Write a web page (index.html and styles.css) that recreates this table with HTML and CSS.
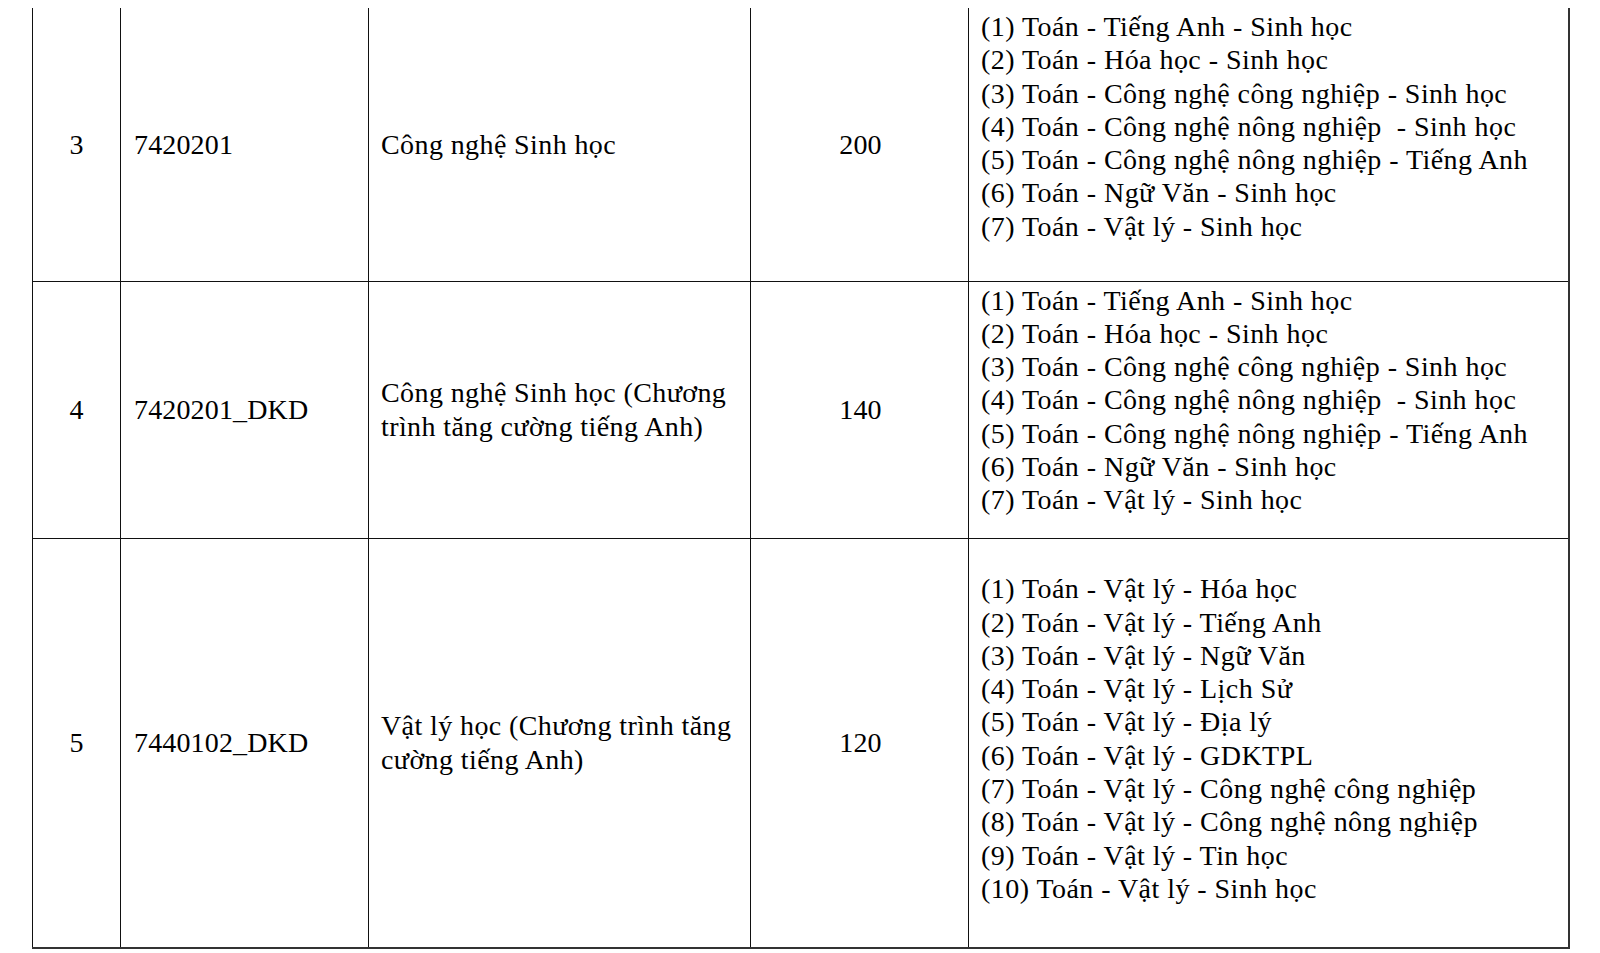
FILE: index.html
```html
<!DOCTYPE html>
<html lang="vi">
<head>
<meta charset="utf-8">
<title>Bảng ngành tuyển sinh</title>
<link rel="stylesheet" href="styles.css">
</head>
<body>
<table class="majors">
  <colgroup>
    <col class="c-no">
    <col class="c-code">
    <col class="c-name">
    <col class="c-quota">
    <col class="c-combo">
  </colgroup>
  <tbody>
    <tr class="row row-1">
      <td class="no">3</td>
      <td class="code">7420201</td>
      <td class="name">Công nghệ Sinh học</td>
      <td class="quota">200</td>
      <td class="combo combo-top">
        <div>(1) Toán - Tiếng Anh - Sinh học</div>
        <div>(2) Toán - Hóa học - Sinh học</div>
        <div>(3) Toán - Công nghệ công nghiệp - Sinh học</div>
        <div>(4) Toán - Công nghệ nông nghiệp&nbsp; - Sinh học</div>
        <div>(5) Toán - Công nghệ nông nghiệp - Tiếng Anh</div>
        <div>(6) Toán - Ngữ Văn - Sinh học</div>
        <div>(7) Toán - Vật lý - Sinh học</div>
      </td>
    </tr>
    <tr class="row row-2">
      <td class="no">4</td>
      <td class="code">7420201_DKD</td>
      <td class="name">Công nghệ Sinh học (Chương<br>trình tăng cường tiếng Anh)</td>
      <td class="quota">140</td>
      <td class="combo combo-top">
        <div>(1) Toán - Tiếng Anh - Sinh học</div>
        <div>(2) Toán - Hóa học - Sinh học</div>
        <div>(3) Toán - Công nghệ công nghiệp - Sinh học</div>
        <div>(4) Toán - Công nghệ nông nghiệp&nbsp; - Sinh học</div>
        <div>(5) Toán - Công nghệ nông nghiệp - Tiếng Anh</div>
        <div>(6) Toán - Ngữ Văn - Sinh học</div>
        <div>(7) Toán - Vật lý - Sinh học</div>
      </td>
    </tr>
    <tr class="row row-3">
      <td class="no">5</td>
      <td class="code">7440102_DKD</td>
      <td class="name">Vật lý học (Chương trình tăng<br>cường tiếng Anh)</td>
      <td class="quota">120</td>
      <td class="combo combo-mid">
        <div>(1) Toán - Vật lý - Hóa học</div>
        <div>(2) Toán - Vật lý - Tiếng Anh</div>
        <div>(3) Toán - Vật lý - Ngữ Văn</div>
        <div>(4) Toán - Vật lý - Lịch Sử</div>
        <div>(5) Toán - Vật lý - Địa lý</div>
        <div>(6) Toán - Vật lý - GDKTPL</div>
        <div>(7) Toán - Vật lý - Công nghệ công nghiệp</div>
        <div>(8) Toán - Vật lý - Công nghệ nông nghiệp</div>
        <div>(9) Toán - Vật lý - Tin học</div>
        <div>(10) Toán - Vật lý - Sinh học</div>
      </td>
    </tr>
  </tbody>
</table>
</body>
</html>
```

FILE: styles.css
```css
html, body {
  margin: 0;
  padding: 0;
  background: #ffffff;
}

body {
  padding: 8px 0 0 32px;
  font-family: "Liberation Serif", "Times New Roman", serif;
  font-size: 28px;
  line-height: 33.3px;
  letter-spacing: 0.45px;
  color: #000;
}

.majors {
  border-collapse: collapse;
  table-layout: fixed;
  width: 1536px;
}

.c-no { width: 88px; }
.c-code { width: 248px; }
.c-name { width: 382px; }
.c-quota { width: 218px; }
.c-combo { width: 600px; }

.majors td {
  border: 1.5px solid #111;
  padding: 0 12px;
  vertical-align: middle;
}

.majors .row-1 td {
  border-top: none;
}

.row-1 { height: 273px; }
.row-2 { height: 257px; }
.row-3 { height: 410px; }

.majors .row-3 td {
  border-bottom: 2px solid #333;
}

.majors td:last-child {
  border-right: 2px solid #333;
}

.majors .no {
  text-align: center;
  padding: 0;
  letter-spacing: 0;
}

.majors .code {
  padding-left: 13px;
  letter-spacing: 0.15px;
}

.majors .quota {
  text-align: center;
  letter-spacing: 0.2px;
  padding-left: 14px;
}

.majors .name {
  letter-spacing: 0.4px;
}

.majors .combo-top {
  vertical-align: top;
  padding-top: 2px;
}

.majors .combo-mid {
  padding-bottom: 8px;
}
```
